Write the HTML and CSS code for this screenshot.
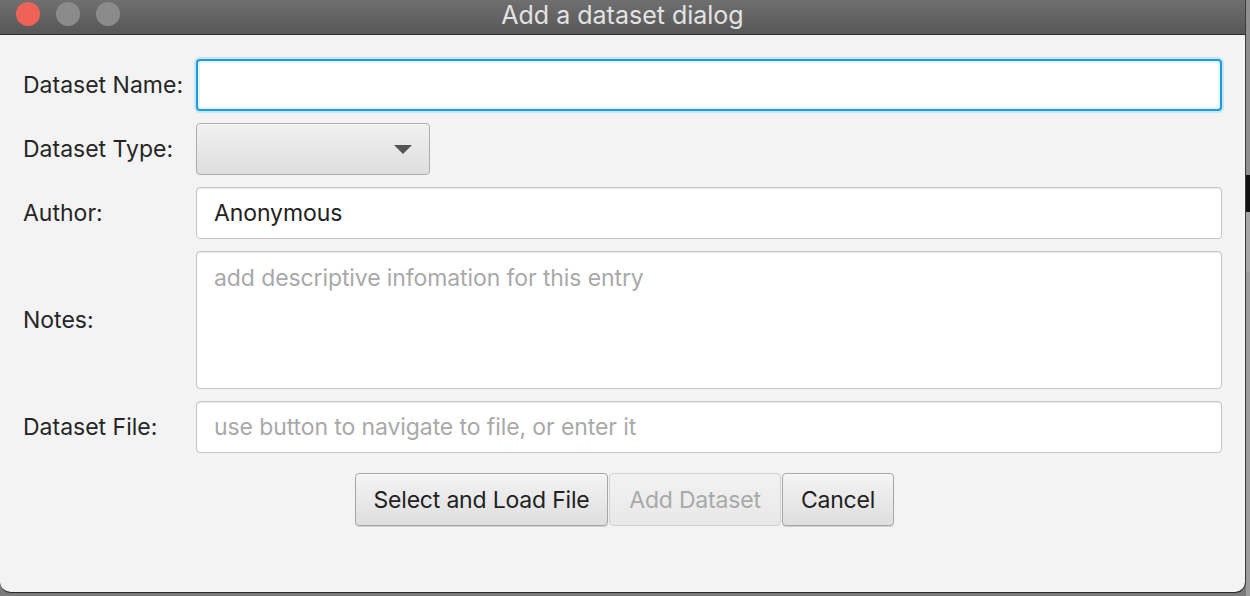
FILE: index.html
```html
<!DOCTYPE html>
<html>
<head>
<meta charset="utf-8">
<link rel="stylesheet" href="styles.css">
</head>
<body>
<div class="desk">
  <div class="window">
    <div class="titlebar">
      <div class="lights">
        <span class="light red"></span>
        <span class="light gray"></span>
        <span class="light gray"></span>
      </div>
      <div class="title">Add a dataset dialog</div>
    </div>
    <div class="content">
      <div class="form">
        <label class="lbl">Dataset Name:</label>
        <div class="field focus"></div>
        <label class="lbl">Dataset Type:</label>
        <div class="combo"><span class="arrow"></span></div>
        <label class="lbl">Author:</label>
        <div class="field"><span class="val">Anonymous</span></div>
        <label class="lbl">Notes:</label>
        <div class="field area"><span class="ph">add descriptive infomation for this entry</span></div>
        <label class="lbl">Dataset File:</label>
        <div class="field"><span class="ph">use button to navigate to file, or enter it</span></div>
      </div>
      <div class="buttons">
        <button class="btn sel">Select and Load File</button>
        <button class="btn add disabled">Add Dataset</button>
        <button class="btn cancel">Cancel</button>
      </div>
    </div>
  </div>
  <div class="side">
    <div class="blk b1"></div>
    <div class="blk b2"></div>
    <div class="blk b3"></div>
  </div>
</div>
</body>
</html>
```

FILE: styles.css
```css
* { box-sizing: border-box; }
html, body { margin: 0; padding: 0; }
body {
  width: 1250px;
  height: 596px;
  overflow: hidden;
  background: #8a8a8a;
  font-family: Inter, "Liberation Sans", sans-serif;
}
.desk {
  display: flex;
  width: 1250px;
  height: 596px;
  background: linear-gradient(#8c8c8c, #7a7a7a);
}
.window {
  width: 1246px;
  height: 593px;
  display: flex;
  flex-direction: column;
  background: #f3f3f3;
  border-radius: 0 0 11px 11px;
  border-bottom: 1px solid #2a2a2a;
  border-right: 1px solid #3a3a3a;
  overflow: hidden;
}
.titlebar {
  height: 35px;
  flex: none;
  display: flex;
  align-items: center;
  background: linear-gradient(#6f6f6f, #575757);
  border-bottom: 1px solid #2e2e2e;
  padding-left: 16px;
  position: relative;
}
.lights { display: flex; gap: 16px; margin-top: -6px; }
.light { width: 24px; height: 24px; border-radius: 50%; display: block; }
.light.red { background: #ee6258; }
.light.gray { background: #8b8b8b; }
.title {
  position: absolute;
  left: 0; right: 0; top: 0;
  text-align: center;
  color: #e3e3e3;
  font-size: 25px;
  line-height: 31px;
}
.content {
  flex: 1;
  padding: 24px 23px 0 23px;
  display: flex;
  flex-direction: column;
}
.form {
  display: grid;
  grid-template-columns: 173px 1fr;
  grid-template-rows: 52px 52px 52px 138px 52px;
  row-gap: 12px;
  align-items: center;
}
.lbl {
  color: #262626;
  font-size: 23px;
  letter-spacing: 0;
}
.field {
  height: 52px;
  background: #fff;
  border: 1px solid #c4c4c4;
  border-radius: 4px;
  box-shadow: inset 0 2px 2px -1px #e6e6e6;
  display: flex;
  align-items: center;
  padding-left: 17px;
  font-size: 23px;
  letter-spacing: -0.1px;
}
.field.focus {
  border: 2px solid #1a9edb;
  box-shadow: 0 0 0 2px #c9e6f4, inset 0 0 0 2px #e7f4fa;
}
.field.area {
  height: 138px;
  align-items: flex-start;
  padding-top: 12px;
}
.val { color: #222; }
.ph { color: #a9a9a9; }
.combo {
  width: 234px;
  height: 52px;
  border: 1px solid #adadad;
  border-radius: 4px;
  background: linear-gradient(#f1f1f1, #dedede);
  box-shadow: inset 0 1px 0 #fafafa;
  display: flex;
  align-items: center;
  justify-content: flex-end;
  padding-right: 17px;
}
.arrow {
  width: 0; height: 0;
  border-left: 9px solid transparent;
  border-right: 9px solid transparent;
  border-top: 9px solid #545454;
}
.buttons {
  display: flex;
  justify-content: center;
  gap: 1px;
  margin-top: 20px;
  margin-left: 4px;
}
.btn {
  height: 53px;
  border: 1px solid #a6a6a6;
  border-radius: 4px;
  background: linear-gradient(#f4f4f4, #dedede);
  box-shadow: inset 0 1px 0 #fbfbfb, 0 1px 0 #d0d0d0;
  font-family: Inter, "Liberation Sans", sans-serif;
  font-size: 23px;
  letter-spacing: -0.2px;
  color: #222;
  padding: 0;
}
.btn.sel { width: 253px; }
.btn.add { width: 172px; }
.btn.cancel { width: 112px; }
.btn.disabled {
  color: #a9a9a9;
  border-color: #d2d2d2;
  background: linear-gradient(#f2f2f2, #e8e8e8);
  box-shadow: none;
}
.side {
  flex: 1;
  display: flex;
  flex-direction: column;
  background: #9c9c9c;
}
.blk { width: 100%; }
.b1 { height: 175px; background: #8f8f8f; }
.b2 { height: 37px; background: #111; }
.b3 { height: 60px; background: #a5a5a5; }
```
